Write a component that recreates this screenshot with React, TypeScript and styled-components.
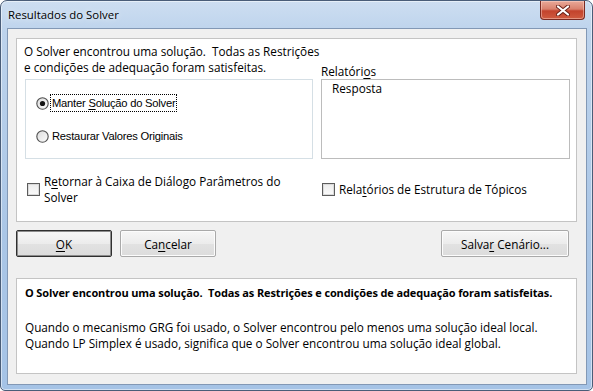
import React from 'react';
import styled, { createGlobalStyle } from 'styled-components';

const GlobalStyle = createGlobalStyle`
  html, body {
    margin: 0;
    padding: 0;
    background: #ffffff;
  }
  body {
    font-family: "Open Sans", "Noto Sans", "DejaVu Sans", sans-serif;
    font-size: 11.75px;
    color: #000;
  }
  * {
    box-sizing: border-box;
  }
`;

const Window = styled.div`
  width: 593px;
  height: 391px;
  border: 1px solid #4a5d78;
  border-radius: 7px 7px 5px 5px;
  background: linear-gradient(180deg, #cddef1 0%, #bdd3ec 8%, #aac6e6 60%, #a5c3e6 100%);
  box-shadow: inset 0 0 0 1px rgba(255, 255, 255, 0.5);
  display: flex;
  flex-direction: column;
  overflow: hidden;
`;

const TitleBar = styled.div`
  height: 27px;
  display: flex;
  align-items: flex-start;
  padding-left: 7px;
`;

const TitleText = styled.div`
  margin-top: 6px;
  line-height: 16px;
  font-size: 11.4px;
  text-shadow: 0 0 6px rgba(255, 255, 255, 0.9);
`;

const CloseButton = styled.div`
  margin-left: auto;
  margin-right: 7px;
  width: 45px;
  height: 19px;
  border: 1px solid #7a2a22;
  border-top: none;
  border-radius: 0 0 4px 4px;
  background: linear-gradient(180deg, #e9a999 0%, #d9816d 45%, #c3432d 55%, #cf5b40 100%);
  box-shadow: inset 0 0 0 1px rgba(255, 220, 210, 0.45);
  display: flex;
  align-items: center;
  justify-content: center;
`;

const Client = styled.div`
  flex: 1;
  margin: 0 5px 5px 6px;
  border: 1px solid #8298b5;
  background: #f0f0f0;
  padding: 9px 9px 10px 8px;
  display: flex;
  flex-direction: column;
`;

const Panel = styled.div<{ $h: number }>`
  width: 561px;
  height: ${(p) => p.$h}px;
  background: #ffffff;
  border: 1px solid #c4c4c4;
`;

const ResultPanel = styled(Panel)`
  padding: 4px 6px 0 7px;
`;

const Message = styled.div`
  line-height: 16px;
  white-space: nowrap;
`;

const TopRow = styled.div`
  display: flex;
  align-items: flex-end;
  gap: 8px;
`;

const LeftCol = styled.div`
  width: 289px;
  display: flex;
  flex-direction: column;
`;

const RightCol = styled.div`
  flex: 1;
  display: flex;
  flex-direction: column;
`;

const GroupBox = styled.div`
  margin: 4px 0 0 1px;
  width: 288px;
  height: 80px;
  border: 1px solid #d5dfe5;
  padding: 14px 0 0 10px;
  display: flex;
  flex-direction: column;
  gap: 15px;
`;

const OptionRow = styled.div`
  height: 18px;
  display: flex;
  align-items: center;
`;

const OptionLabel = styled.span<{ $focus?: boolean }>`
  margin-left: 1px;
  padding: 0 1px;
  font-family: "Liberation Sans", Arial, sans-serif;
  font-size: 11.2px;
  letter-spacing: -0.22px;
  line-height: 16px;
  border: 1px dotted ${(p) => (p.$focus ? '#000' : 'transparent')};
`;

const Key = styled.span`
  text-decoration: underline;
  text-underline-offset: 2px;
`;

const FieldLabel = styled.div`
  line-height: 16px;
`;

const ListBox = styled.div`
  width: 249px;
  height: 80px;
  border: 1px solid #bcbcbc;
  background: #fff;
  padding: 0 0 0 10px;
  line-height: 16px;
`;

const CheckRow = styled.div`
  margin-top: 14px;
  display: flex;
  gap: 8px;
`;

const CheckItem = styled.div<{ $w?: number; $indent: number }>`
  ${(p) => (p.$w ? `width: ${p.$w}px;` : 'flex: 1;')}
  padding-left: ${(p) => p.$indent}px;
  display: flex;
  align-items: center;
  gap: 4px;
  line-height: 16px;
  white-space: nowrap;
`;

const Box = styled.span`
  width: 13px;
  height: 13px;
  flex: none;
  border: 1px solid #5c5c5c;
  background: linear-gradient(180deg, #ececec, #fbfbfb);
  box-shadow: inset 0 0 0 1px #dadada;
`;

const ButtonRow = styled.div`
  margin-top: 8px;
  height: 27px;
  display: flex;
  gap: 8px;
  padding-right: 8px;
`;

const Button = styled.button<{ $w: number; $default?: boolean; $push?: boolean }>`
  width: ${(p) => p.$w}px;
  height: 27px;
  margin-left: ${(p) => (p.$push ? 'auto' : '0')};
  font: inherit;
  color: #000;
  border: 1px solid ${(p) => (p.$default ? '#2f2f2f' : '#a9a9a9')};
  border-radius: 2px;
  background: linear-gradient(180deg, #f6f6f6 0%, #ececec 50%, #e2e2e2 51%, #dcdcdc 100%);
  box-shadow: inset 0 0 0 1px ${(p) => (p.$default ? '#8c8c8c' : '#fcfcfc')};
  padding: 0;
  line-height: 16px;
`;

const InfoPanel = styled(Panel)`
  margin-top: 21px;
  padding: 6px 8px;
  line-height: 16px;
`;

const Bold = styled.div`
  font-weight: 700;
  font-size: 11px;
  letter-spacing: -0.12px;
  white-space: nowrap;
`;

const InfoText = styled.div`
  margin-top: 18px;
  white-space: nowrap;
`;

const Radio = ({ checked }: { checked?: boolean }) => (
  <svg width="13" height="13" viewBox="0 0 13 13" style={{ flex: 'none' }}>
    <defs>
      <linearGradient id={checked ? 'rg1' : 'rg2'} x1="0" y1="0" x2="1" y2="1">
        <stop offset="0" stopColor="#dcdcdc" />
        <stop offset="1" stopColor="#fcfcfc" />
      </linearGradient>
    </defs>
    <circle cx="6.5" cy="6.5" r="5.7" fill={`url(#${checked ? 'rg1' : 'rg2'})`} stroke="#4f4f4f" strokeWidth="1.1" />
    {checked && <circle cx="6.5" cy="6.5" r="2.6" fill="#141414" />}
  </svg>
);

const CloseIcon = () => (
  <svg width="14" height="11" viewBox="0 0 14 11">
    <path d="M2 1.5 L12 9.5 M12 1.5 L2 9.5" stroke="#6b2219" strokeWidth="4" strokeLinecap="round" />
    <path d="M2 1.5 L12 9.5 M12 1.5 L2 9.5" stroke="#ffffff" strokeWidth="2.2" strokeLinecap="round" />
  </svg>
);

export default function App() {
  return (
    <>
      <GlobalStyle />
      <Window>
        <TitleBar>
          <TitleText>Resultados do Solver</TitleText>
          <CloseButton>
            <CloseIcon />
          </CloseButton>
        </TitleBar>
        <Client>
          <ResultPanel $h={184}>
            <TopRow>
              <LeftCol>
                <Message>
                  O Solver encontrou uma solução.&nbsp; Todas as Restrições
                  <br />
                  e condições de adequação foram satisfeitas.
                </Message>
                <GroupBox>
                  <OptionRow>
                    <Radio checked />
                    <OptionLabel $focus>
                      Manter <Key>S</Key>olução do Solver
                    </OptionLabel>
                  </OptionRow>
                  <OptionRow>
                    <Radio />
                    <OptionLabel>Restaurar Valores Originais</OptionLabel>
                  </OptionRow>
                </GroupBox>
              </LeftCol>
              <RightCol>
                <FieldLabel>
                  Relatóri<Key>o</Key>s
                </FieldLabel>
                <ListBox>Resposta</ListBox>
              </RightCol>
            </TopRow>
            <CheckRow>
              <CheckItem $w={289} $indent={3}>
                <Box />
                <span>
                  R<Key>e</Key>tornar à Caixa de Diálogo Parâmetros do
                  <br />
                  Solver
                </span>
              </CheckItem>
              <CheckItem $indent={1}>
                <Box />
                <span>
                  Rela<Key>t</Key>órios de Estrutura de Tópicos
                </span>
              </CheckItem>
            </CheckRow>
          </ResultPanel>
          <ButtonRow>
            <Button $w={96} $default>
              <Key>O</Key>K
            </Button>
            <Button $w={96}>
              Ca<Key>n</Key>celar
            </Button>
            <Button $w={128} $push>
              Salva<Key>r</Key> Cenário...
            </Button>
          </ButtonRow>
          <InfoPanel $h={96}>
            <Bold>O Solver encontrou uma solução.&nbsp; Todas as Restrições e condições de adequação foram satisfeitas.</Bold>
            <InfoText>
              Quando o mecanismo GRG foi usado, o Solver encontrou pelo menos uma solução ideal local.
              <br />
              Quando LP Simplex é usado, significa que o Solver encontrou uma solução ideal global.
            </InfoText>
          </InfoPanel>
        </Client>
      </Window>
    </>
  );
}
